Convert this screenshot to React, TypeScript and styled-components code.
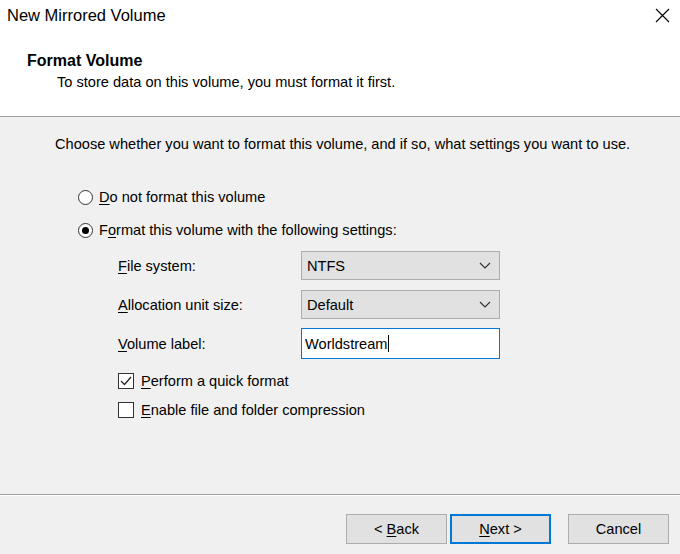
import React from "react";
import styled, { createGlobalStyle } from "styled-components";

const GlobalStyle = createGlobalStyle`
	html, body {
		margin: 0;
		padding: 0;
		background: #f0f0f0;
	}
	body {
		font-family: "Liberation Sans", Arial, sans-serif;
		font-size: 14.6px;
		color: #000;
	}
`;

const Window = styled.div`
	width: 680px;
	height: 554px;
	display: flex;
	flex-direction: column;
	background: #f0f0f0;
	overflow: hidden;
`;

const TitleBar = styled.div`
	height: 31px;
	display: flex;
	align-items: center;
	justify-content: space-between;
	padding: 0 8px 1px 7px;
	background: #fff;
	font-size: 16.5px;
`;

const CloseButton = styled.div`
	width: 16px;
	height: 16px;
	margin-right: 2px;
	display: flex;
	align-items: center;
	justify-content: center;
`;

const Header = styled.div`
	background: #fff;
	height: 85px;
	padding: 20px 0 0 27px;
	box-sizing: border-box;
	border-bottom: 1px solid #a0a0a0;
`;

const HeaderTitle = styled.div`
	font-weight: bold;
	font-size: 16px;
	line-height: 18px;
`;

const HeaderSub = styled.div`
	padding-left: 30px;
	margin-top: 3px;
	line-height: 18px;
`;

const Body = styled.div`
	flex: 1;
	padding: 18px 0 0 55px;
	border-bottom: 1px solid #a0a0a0;
	box-shadow: 0 1px 0 #fff;
`;

const Intro = styled.div`
	line-height: 18px;
`;

const Options = styled.div`
	margin-top: 35px;
	padding-left: 23px;
	display: flex;
	flex-direction: column;
	gap: 15px;
`;

const RadioRow = styled.label`
	display: flex;
	align-items: center;
	gap: 6px;
	line-height: 18px;
`;

const RadioCircle = styled.span<{ checked?: boolean }>`
	width: 15px;
	height: 15px;
	border: 1px solid #333;
	border-radius: 50%;
	background: #fff;
	display: flex;
	align-items: center;
	justify-content: center;
	box-sizing: border-box;
	&::after {
		content: "";
		width: 7px;
		height: 7px;
		border-radius: 50%;
		background: ${(p) => (p.checked ? "#000" : "transparent")};
	}
`;

const Settings = styled.div`
	margin-top: 12px;
	padding-left: 63px;
	display: grid;
	grid-template-columns: 183px 199px;
	grid-auto-rows: 29px;
	row-gap: 10px;
	align-items: center;
`;

const Select = styled.div`
	height: 29px;
	box-sizing: border-box;
	border: 1px solid #adadad;
	background: #e1e1e1;
	display: flex;
	align-items: center;
	justify-content: space-between;
	padding: 0 8px 0 5px;
`;

const TextBox = styled.div`
	height: 31px;
	box-sizing: border-box;
	border: 1px solid #0078d7;
	background: #fff;
	display: flex;
	align-items: center;
	padding: 0 0 0 3px;
`;

const Caret = styled.span`
	width: 1px;
	height: 17px;
	background: #000;
	margin-left: 1px;
`;

const Checks = styled.div`
	margin-top: 14px;
	padding-left: 63px;
	display: flex;
	flex-direction: column;
	gap: 11px;
`;

const CheckRow = styled.label`
	display: flex;
	align-items: center;
	gap: 7px;
	line-height: 18px;
`;

const Box = styled.span`
	width: 16px;
	height: 16px;
	box-sizing: border-box;
	border: 1px solid #333;
	background: #fff;
	display: flex;
	align-items: center;
	justify-content: center;
`;

const Footer = styled.div`
	height: 59px;
	display: flex;
	justify-content: flex-end;
	align-items: flex-start;
	padding: 19px 11px 0 0;
	box-sizing: border-box;
	gap: 3px;
`;

const Button = styled.div<{ focused?: boolean; spaced?: boolean }>`
	width: 101px;
	height: 30px;
	box-sizing: border-box;
	border: ${(p) => (p.focused ? "2px solid #0078d7" : "1px solid #adadad")};
	background: #e1e1e1;
	display: flex;
	align-items: center;
	justify-content: center;
	margin-left: ${(p) => (p.spaced ? "14px" : "0")};
`;

const U = styled.span`
	text-decoration: underline;
	text-underline-offset: 2px;
`;

const Chevron = () => (
	<svg width="12" height="7" viewBox="0 0 12 7">
		<path d="M1 1l5 5 5-5" fill="none" stroke="#333" strokeWidth="1.2" />
	</svg>
);

const App: React.FC = () => {
	return (
		<>
			<GlobalStyle />
			<Window>
				<TitleBar>
					<span>New Mirrored Volume</span>
					<CloseButton>
						<svg width="15" height="15" viewBox="0 0 15 15">
							<path d="M1 1l13 13M14 1L1 14" stroke="#000" strokeWidth="1.1" />
						</svg>
					</CloseButton>
				</TitleBar>
				<Header>
					<HeaderTitle>Format Volume</HeaderTitle>
					<HeaderSub>To store data on this volume, you must format it first.</HeaderSub>
				</Header>
				<Body>
					<Intro>
						Choose whether you want to format this volume, and if so, what settings you want to use.
					</Intro>
					<Options>
						<RadioRow>
							<RadioCircle />
							<span>
								<U>D</U>o not format this volume
							</span>
						</RadioRow>
						<RadioRow>
							<RadioCircle checked />
							<span>
								F<U>o</U>rmat this volume with the following settings:
							</span>
						</RadioRow>
					</Options>
					<Settings>
						<span>
							<U>F</U>ile system:
						</span>
						<Select>
							<span>NTFS</span>
							<Chevron />
						</Select>
						<span>
							<U>A</U>llocation unit size:
						</span>
						<Select>
							<span>Default</span>
							<Chevron />
						</Select>
						<span>
							<U>V</U>olume label:
						</span>
						<TextBox>
							<span>Worldstream</span>
							<Caret />
						</TextBox>
					</Settings>
					<Checks>
						<CheckRow>
							<Box>
								<svg width="12" height="10" viewBox="0 0 12 10">
									<path d="M1 5l3.5 3.5L11 1" fill="none" stroke="#222" strokeWidth="1.3" />
								</svg>
							</Box>
							<span>
								<U>P</U>erform a quick format
							</span>
						</CheckRow>
						<CheckRow>
							<Box />
							<span>
								<U>E</U>nable file and folder compression
							</span>
						</CheckRow>
					</Checks>
				</Body>
				<Footer>
					<Button>
						&lt;&nbsp;<U>B</U>ack
					</Button>
					<Button focused>
						<U>N</U>ext &gt;
					</Button>
					<Button spaced>Cancel</Button>
				</Footer>
			</Window>
		</>
	);
};

export default App;
